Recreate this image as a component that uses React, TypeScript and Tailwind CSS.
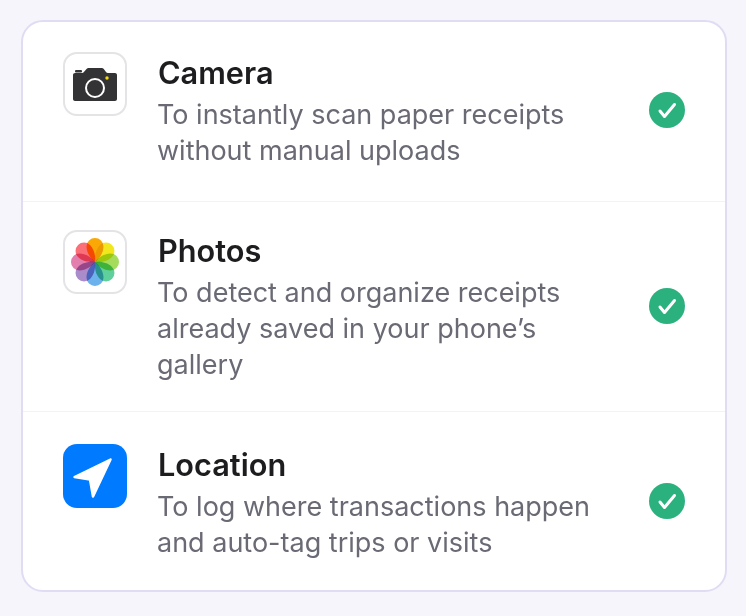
const font = { fontFamily: "Inter, sans-serif" };

const petals = [
  { angle: 0, color: "#f9a806" },
  { angle: 45, color: "#f2e71e" },
  { angle: 90, color: "#a5dc5c" },
  { angle: 135, color: "#5fcf9c" },
  { angle: 180, color: "#6cb2ec" },
  { angle: 225, color: "#ab8ccb" },
  { angle: 270, color: "#e27fae" },
  { angle: 315, color: "#fb6f78" },
];

function CameraIcon() {
  return (
    <div className="mt-[3px] flex h-16 w-16 shrink-0 items-center justify-center rounded-[14px] border-2 border-[#e4e4e7] bg-white">
      <svg width="44" height="33" viewBox="0 0 44 33">
        <rect x="2" y="2" width="7" height="2.500" rx="1" fill="#333335" />
        <path
          d="M2 5h7c.8 0 1.400-.4 1.900-1l2.600-3C14 .3 14.800 0 15.600 0h13c.9 0 1.700.4 2.200 1.100L33 4c.5.700 1.100 1 1.900 1H42c1.100 0 2 .9 2 2v24c0 1.100-.9 2-2 2H2c-1.100 0-2-.9-2-2V7c0-1.100.9-2 2-2z"
          fill="#333335"
        />
        <circle cx="22" cy="20" r="9" fill="none" stroke="#ffffff" strokeWidth="2" />
        <circle cx="34" cy="10" r="1.700" fill="#f5d90a" />
      </svg>
    </div>
  );
}

function PhotosIcon() {
  return (
    <div className="mt-[3px] flex h-16 w-16 shrink-0 items-center justify-center rounded-[14px] border-2 border-[#e4e4e7] bg-white">
      <svg width="50" height="50" viewBox="0 0 50 50">
        <g style={{ isolation: "isolate" }}>
          {petals.map((petal) => (
            <path
              key={petal.angle}
              d="M25 25C21 22 16.500 16 16.500 9.500A8.500 8.500 0 0 1 33.500 9.500C33.500 16 29 22 25 25Z"
              fill={petal.color}
              transform={`rotate(${petal.angle} 25 25)`}
              style={{ mixBlendMode: "multiply" }}
            />
          ))}
        </g>
      </svg>
    </div>
  );
}

function LocationIcon() {
  return (
    <div className="mt-[3px] h-16 w-16 shrink-0 rounded-[14px] bg-[#007aff]">
      <svg width="64" height="64" viewBox="0 0 64 64">
        <polygon
          points="47.500,15.500 11.500,33 27,35.500 30,52.500"
          fill="#ffffff"
          stroke="#ffffff"
          strokeWidth="2.500"
          strokeLinejoin="round"
        />
      </svg>
    </div>
  );
}

function CheckBadge({ className }: { className: string }) {
  return (
    <svg width="36" height="36" viewBox="0 0 36 36" className={`shrink-0 ${className}`}>
      <circle cx="18" cy="18" r="18" fill="#2bb17e" />
      <path
        d="M11 19 15.500 24.500 25.500 12.500"
        fill="none"
        stroke="#ffffff"
        strokeWidth="3"
        strokeLinecap="round"
        strokeLinejoin="round"
      />
    </svg>
  );
}

const rows = [
  {
    title: "Camera",
    lines: ["To instantly scan paper receipts", "without manual uploads"],
    icon: <CameraIcon />,
    spacing: "pt-[27px] pb-[32px] border-b border-[#f3f3f6]",
    check: "mt-[2px]",
  },
  {
    title: "Photos",
    lines: ["To detect and organize receipts", "already saved in your phone’s", "gallery"],
    icon: <PhotosIcon />,
    spacing: "pt-[25px] pb-[28px] border-b border-[#f3f3f6]",
    check: "mt-[2px]",
  },
  {
    title: "Location",
    lines: ["To log where transactions happen", "and auto-tag trips or visits"],
    icon: <LocationIcon />,
    spacing: "pt-[29px] pb-[29px]",
    check: "",
  },
];

export default function App() {
  return (
    <div className="h-[616px] w-[746px] bg-[#f5f5fb] pl-[21px] pt-5" style={font}>
      <div className="flex w-[706px] flex-col rounded-[22px] border-2 border-[#e0dcf3] bg-white">
        {rows.map((row) => (
          <div key={row.title} className={`flex items-center justify-between pl-[40px] pr-[40px] ${row.spacing}`}>
            <div className="flex items-start gap-[30px]">
              {row.icon}
              <div>
                <h2 className="ml-px text-[30.700px] leading-[48px] font-semibold text-[#1d1d20]">{row.title}</h2>
                {row.lines.map((line) => (
                  <p key={line} className="text-[27px] leading-[36px] text-[#6a6a75]">
                    {line}
                  </p>
                ))}
              </div>
            </div>
            <CheckBadge className={row.check} />
          </div>
        ))}
      </div>
    </div>
  );
}
